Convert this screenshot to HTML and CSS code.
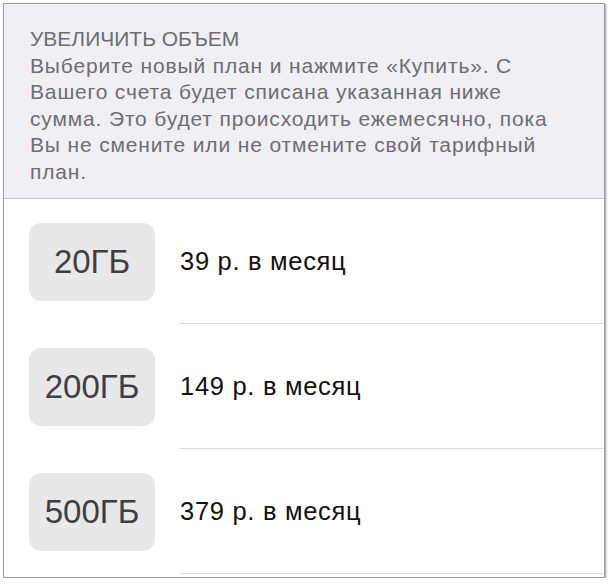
FILE: index.html
```html
<!DOCTYPE html>
<html lang="ru">
<head>
<meta charset="utf-8">
<title>Увеличить объем</title>
<link rel="stylesheet" href="styles.css">
</head>
<body>
<div class="frame">
  <div class="header">
    <p class="title">УВЕЛИЧИТЬ ОБЪЕМ</p>
    <p class="desc">Выберите новый план и нажмите «Купить». С<br>Вашего счета будет списана указанная ниже<br>сумма. Это будет происходить ежемесячно, пока<br>Вы не смените или не отмените свой тарифный<br>план.</p>
  </div>
  <ul class="plans">
    <li class="plan">
      <div class="badge">20ГБ</div>
      <div class="info">39 р. в месяц</div>
    </li>
    <li class="plan">
      <div class="badge">200ГБ</div>
      <div class="info">149 р. в месяц</div>
    </li>
    <li class="plan">
      <div class="badge">500ГБ</div>
      <div class="info">379 р. в месяц</div>
    </li>
  </ul>
</div>
</body>
</html>
```
FILE: styles.css
```css
html, body {
  margin: 0;
  padding: 0;
  background: #ffffff;
}
body {
  padding: 3px 0 0 3px;
  font-family: "Liberation Sans", Arial, sans-serif;
}
.frame {
  width: 600px;
  height: 573px;
  border: 1px solid #9c9c9c;
  box-shadow: 1px 1px 2px rgba(0, 0, 0, 0.4);
  background: #ffffff;
  overflow: hidden;
}
.header {
  background: #efeff4;
  border-bottom: 1px solid #c8c7cc;
  padding: 22px 10px 12px 26px;
  height: 160px;
  color: #6d6d72;
  font-size: 21px;
  line-height: 26.6px;
}
.title, .desc {
  margin: 0;
}
.desc {
  letter-spacing: 0.85px;
}
.plans {
  list-style: none;
  margin: 0;
  padding: 0;
}
.plan {
  display: flex;
  align-items: center;
  height: 125px;
  padding-left: 25px;
}
.badge {
  width: 126px;
  height: 78px;
  border-radius: 12px;
  background: #e8e8e8;
  color: #3f3f3f;
  font-size: 33px;
  display: flex;
  align-items: center;
  justify-content: center;
  flex-shrink: 0;
}
.info {
  flex: 1;
  align-self: stretch;
  margin-left: 25px;
  border-bottom: 1px solid #d9d9d9;
  display: flex;
  align-items: center;
  font-size: 25.5px;
  letter-spacing: 0.7px;
  color: #111111;
}
```
